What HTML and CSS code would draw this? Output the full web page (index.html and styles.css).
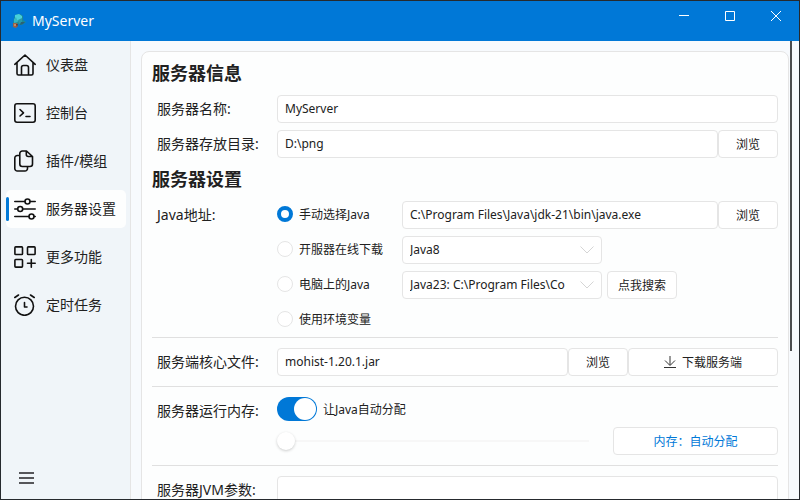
FILE: index.html
```html
<!DOCTYPE html>
<html lang="zh-CN">
  <head>
    <meta charset="utf-8">
    <title>MyServer</title>
    <link rel="stylesheet" href="styles.css">
  </head>
  <body>
    <div class="window">
      <header class="titlebar">
        <svg class="app-icon" width="14" height="16" viewBox="0 0 14 16">
          <path d="M3 2l5-1 3 2v4l3 2-4 3-4-1-4 1-1-2 1-4z" fill="#1c8a96"/>
          <path d="M3 2l4-1 3 2v3l-4 2-3-2z" fill="#48d0da"/>
          <path d="M2 6l2-2 2 5-4 1z" fill="#35b5c0"/>
          <path d="M6 7l4-2v4l-3 2z" fill="#2899a8"/>
          <path d="M9 9l4 0-2 2-3 1z" fill="#2b6272"/>
          <path d="M1 10l4 0 1 3-2 2-3-1z" fill="#986348"/>
          <path d="M2 11h2v2h-2z" fill="#c08a68"/>
          <path d="M4 11h2l-1 3z" fill="#5c3c33"/>
        </svg>
        <h1 class="app-title">MyServer</h1>
        <div class="window-buttons">
          <button type="button" aria-label="最小化">
            <svg width="10" height="10" viewBox="0 0 10 10"><path d="M0 4.500h10"/></svg>
          </button>
          <button type="button" aria-label="最大化">
            <svg width="10" height="10" viewBox="0 0 10 10"><path d="M.5.5h9v9h-9z"/></svg>
          </button>
          <button type="button" aria-label="关闭">
            <svg width="10" height="10" viewBox="0 0 10 10"><path d="M0 0l10 10M10 0L0 10"/></svg>
          </button>
        </div>
      </header>

      <div class="body">
        <!-- side menu -->
        <nav class="sidebar">
          <a class="nav-item" href="#dashboard">
            <svg width="22" height="22" viewBox="0 0 22 22"><path d="M.8 10.300L11 1l10.200 9.300M3 8.600V19.500a1.500 1.500 0 0 0 1.500 1.500h13a1.500 1.500 0 0 0 1.500-1.500V8.600M7.500 21v-7.500a2 2 0 0 1 2-2h3a2 2 0 0 1 2 2V21"/></svg>
            <span>仪表盘</span>
          </a>
          <a class="nav-item" href="#console">
            <svg width="22" height="22" viewBox="0 0 22 22"><rect x=".8" y="1.800" width="20.400" height="18.400" rx="2.200"/><path d="M6 7.500l3.500 3.300L6 14M12 14.500h4"/></svg>
            <span>控制台</span>
          </a>
          <a class="nav-item" href="#plugins">
            <svg width="22" height="22" viewBox="0 0 22 22"><path d="M12.500 1H8.300a2.500 2.500 0 0 0-2.500 2.500v10.500a2.500 2.500 0 0 0 2.500 2.500h7.700a2.500 2.500 0 0 0 2.500-2.500V6.500zM12.300 1.200v3.300a2 2 0 0 0 2 2h4M5.800 5.500H3.300A2.500 2.500 0 0 0 .8 8v10.500A2.500 2.500 0 0 0 3.300 21h7.700a2.500 2.500 0 0 0 2.500-2.500v-2"/></svg>
            <span>插件/模组</span>
          </a>
          <a class="nav-item active" href="#settings" aria-current="page">
            <svg width="22" height="22" viewBox="0 0 22 22"><path d="M.8 3.500h10M16.200 3.500h5M.8 11h2.700M8.900 11h12.300M.8 18.500h14M20.200 18.500h1"/><circle cx="13.500" cy="3.500" r="2.500"/><circle cx="6.200" cy="11" r="2.500"/><circle cx="17.500" cy="18.500" r="2.500"/></svg>
            <span>服务器设置</span>
          </a>
          <a class="nav-item" href="#more">
            <svg width="22" height="22" viewBox="0 0 22 22"><rect x=".9" y=".9" width="7.600" height="7.600" rx=".8"/><rect x="13.500" y=".9" width="7.600" height="7.600" rx=".8"/><rect x=".9" y="13.500" width="7.600" height="7.600" rx=".8"/><path d="M17.300 13.500v7.700M13.500 17.300h7.700"/></svg>
            <span>更多功能</span>
          </a>
          <a class="nav-item" href="#tasks">
            <svg width="22" height="22" viewBox="0 0 22 22"><circle cx="10.500" cy="12.300" r="9"/><path d="M10.500 8.500v4.500h2.500M.8 3.500L4.500 1M20.200 3.500L16.500 1"/></svg>
            <span>定时任务</span>
          </a>
          <button class="menu-toggle" type="button" aria-label="菜单">
            <svg width="15" height="12" viewBox="0 0 15 12"><path d="M0 1h15M0 6h15M0 11h15"/></svg>
          </button>
        </nav>

        <main class="content">
          <form class="panel">
            <section class="group">
              <h2>服务器信息</h2>
              <div class="row">
                <label for="name">服务器名称:</label>
                <div class="field"><input id="name" type="text" value="MyServer"></div>
              </div>
              <div class="row">
                <label for="base">服务器存放目录:</label>
                <div class="field">
                  <input id="base" type="text" value="D:\png">
                  <button class="browse" type="button">浏览</button>
                </div>
              </div>
              <h2>服务器设置</h2>
              <div class="row">
                <span class="row-label" id="java-label">Java地址:</span>
                <div class="java-list" role="radiogroup" aria-labelledby="java-label">
                  <div class="java-option">
                    <label><input type="radio" name="java" checked>手动选择Java</label>
                    <div class="field">
                      <input type="text" aria-label="Java路径" value="C:\Program Files\Java\jdk-21\bin\java.exe">
                      <button class="browse" type="button">浏览</button>
                    </div>
                  </div>
                  <div class="java-option">
                    <label><input type="radio" name="java">开服器在线下载</label>
                    <div class="select-box">
                      <select aria-label="Java版本"><option>Java8</option></select>
                      <svg width="14" height="8" viewBox="0 0 14 8"><path d="M.5.5L7 7 13.500.5"/></svg>
                    </div>
                  </div>
                  <div class="java-option">
                    <label><input type="radio" name="java">电脑上的Java</label>
                    <div class="select-box">
                      <select aria-label="已安装的Java"><option>Java23: C:\Program Files\Co</option></select>
                      <svg width="14" height="8" viewBox="0 0 14 8"><path d="M.5.5L7 7 13.500.5"/></svg>
                    </div>
                    <button class="search" type="button">点我搜索</button>
                  </div>
                  <div class="java-option">
                    <label><input type="radio" name="java">使用环境变量</label>
                  </div>
                </div>
              </div>
            </section>

            <section class="group">
              <div class="row">
                <label for="core">服务端核心文件:</label>
                <div class="field">
                  <input id="core" type="text" value="mohist-1.20.1.jar">
                  <button class="browse" type="button">浏览</button>
                  <button class="download" type="button">
                    <svg width="12" height="12" viewBox="0 0 12 12"><path d="M6 0v9M1 4.500l5 5 5-5M0 11.500h12"/></svg>
                    下载服务端
                  </button>
                </div>
              </div>
            </section>

            <section class="group">
              <div class="row">
                <span class="row-label">服务器运行内存:</span>
                <div class="memory">
                  <label class="switch"><input type="checkbox" role="switch" checked>让Java自动分配</label>
                  <div class="memory-bar">
                    <input type="range" min="0" max="100" value="0" aria-label="内存" disabled>
                    <button class="memory-value" type="button">内存：自动分配</button>
                  </div>
                </div>
              </div>
            </section>

            <section class="group">
              <div class="row">
                <label for="jvm">服务器JVM参数:</label>
                <div class="field"><textarea id="jvm"></textarea></div>
              </div>
            </section>
          </form>
          <div class="scroll-thumb"></div>
        </main>
      </div>
    </div>
  </body>
</html>
```
FILE: styles.css
```css
* {
  box-sizing: border-box;
}

body {
  margin: 0;
  color: #212121;
  font-family: "Noto Sans", "Noto Sans CJK SC", sans-serif;
  font-size: 12px;
}

button, input, select, textarea {
  font: inherit;
  color: inherit;
}

svg {
  flex: none;
  fill: none;
}

.window {
  display: flex;
  flex-direction: column;
  height: 100vh;
  border: 1px solid #262a2e;
  overflow: hidden;
}

/* title bar */
.titlebar {
  display: flex;
  flex: none;
  align-items: center;
  height: 40px;
  padding-left: 11px;
  background: #0078d7;
  color: #fff;
}

.app-title {
  margin: 0 0 0 6px;
  padding-bottom: 2px;
  font-size: 14px;
  font-weight: 400;
}

.window-buttons {
  display: flex;
  align-self: flex-start;
  margin-left: auto;
}

.window-buttons button {
  display: flex;
  align-items: center;
  justify-content: center;
  width: 46px;
  height: 30px;
  padding: 0;
  border: none;
  background: none;
}

.window-buttons svg {
  stroke: #fff;
}

.body {
  display: flex;
  flex: 1;
  min-height: 0;
}

/* sidebar */
.sidebar {
  display: flex;
  flex: none;
  flex-direction: column;
  gap: 10px;
  width: 130px;
  padding: 5px 4px 5px 5px;
  border-right: 1px solid #e5e5e5;
  background: #f0f5f9;
}

.nav-item {
  position: relative;
  display: flex;
  align-items: center;
  gap: 10px;
  height: 38px;
  padding-left: 8px;
  border-radius: 5px;
  color: #212121;
  font-size: 14px;
  text-decoration: none;
  white-space: nowrap;
}

.nav-item span {
  padding-bottom: 2px;
}

.nav-item svg {
  stroke: #111;
  stroke-width: 1.6;
  stroke-linecap: round;
  stroke-linejoin: round;
}

.nav-item.active {
  background: #fdfefe;
}

.nav-item.active::before {
  content: "";
  position: absolute;
  left: 0;
  top: 7px;
  width: 3px;
  height: 24px;
  border-radius: 2px;
  background: #0078d7;
}

.menu-toggle {
  display: flex;
  align-items: center;
  height: 32px;
  margin-top: auto;
  padding: 0 13px;
  border: none;
  background: none;
}

.menu-toggle svg {
  stroke: #56565a;
  stroke-width: 2;
}

/* settings page */
.content {
  position: relative;
  flex: 1;
  min-width: 0;
  padding: 10px;
  background: #f7fafd;
  overflow: hidden;
}

.scroll-thumb {
  position: absolute;
  top: 0;
  right: 7px;
  width: 2px;
  height: 310px;
  background: #4b4d4f;
}

.panel {
  padding: 7px 10px 10px;
  border: 1px solid #e5e5e5;
  border-radius: 8px;
  background: #fdfefe;
}

.group {
  display: flex;
  flex-direction: column;
  gap: 7px;
  padding: 10px 0;
  border-top: 1px solid #e0e0e0;
}

.group:first-child {
  padding: 0 0 3px;
  border-top: none;
}

h2 {
  margin: 0;
  font-size: 18px;
  line-height: 29px;
}

.row {
  display: grid;
  grid-template-columns: 120px 1fr;
  padding-left: 5px;
}

.row > label,
.row-label {
  font-size: 14px;
  line-height: 28px;
}

.field {
  display: flex;
  flex: 1;
  min-width: 0;
}

.field input,
.field textarea {
  flex: 1;
  min-width: 0;
  height: 28px;
  padding: 0 7px 2px;
  border: 1px solid #e5e5e5;
  border-radius: 4px;
  background: #fff;
}

.field textarea {
  height: 70px;
  padding: 4px 7px;
  resize: none;
}

.panel button {
  display: flex;
  flex: none;
  align-items: center;
  justify-content: center;
  gap: 6px;
  height: 28px;
  padding: 0;
  border: 1px solid #e5e5e5;
  border-radius: 4px;
  background: #fff;
}

.panel .browse {
  width: 60px;
}

.panel .search {
  width: 70px;
  margin-left: 5px;
}

.panel .download {
  width: 150px;
}

.download svg {
  stroke: #333;
}

.java-list {
  display: flex;
  flex-direction: column;
  gap: 7px;
}

.java-option {
  display: flex;
  align-items: center;
  height: 28px;
}

.java-option label {
  display: flex;
  align-items: center;
  gap: 6px;
  width: 125px;
  padding-bottom: 2px;
}

input[type="radio"] {
  appearance: none;
  width: 16px;
  height: 16px;
  margin: 0;
  border: 1px solid #e5e5e5;
  border-radius: 50%;
  background: #fff;
}

input[type="radio"]:checked {
  border: 4px solid #0078d7;
}

.select-box {
  position: relative;
  width: 200px;
}

.select-box select {
  display: block;
  appearance: none;
  width: 100%;
  height: 28px;
  padding: 0 30px 2px 7px;
  border: 1px solid #e5e5e5;
  border-radius: 4px;
  background: #fff;
}

.select-box svg {
  position: absolute;
  top: 10px;
  right: 8px;
  stroke: #d5d5d5;
  pointer-events: none;
}

/* memory */
.memory {
  display: flex;
  flex-direction: column;
  gap: 6px;
}

.switch {
  display: flex;
  align-items: center;
  gap: 6px;
  height: 24px;
}

.switch input {
  appearance: none;
  display: flex;
  align-items: center;
  width: 40px;
  height: 24px;
  margin: 0;
  padding: 1px;
  border-radius: 12px;
  background: #d0d0d0;
}

.switch input::before {
  content: "";
  width: 22px;
  height: 22px;
  border-radius: 50%;
  background: #fff;
}

.switch input:checked {
  justify-content: flex-end;
  background: #0078d7;
}

.memory-bar {
  display: flex;
  align-items: center;
  gap: 24px;
}

.memory-bar input {
  appearance: none;
  flex: 1;
  min-width: 0;
  height: 18px;
  margin: 0;
  background: none;
}

.memory-bar input::-webkit-slider-runnable-track {
  height: 2px;
  background: #f7f7f7;
}

.memory-bar input::-webkit-slider-thumb {
  appearance: none;
  width: 18px;
  height: 18px;
  margin-top: -8px;
  border-radius: 50%;
  background: #fff;
  box-shadow: 0 1px 3px rgba(0, 0, 0, .2);
}

.panel .memory-value {
  width: 165px;
  color: #0078d7;
}
```
